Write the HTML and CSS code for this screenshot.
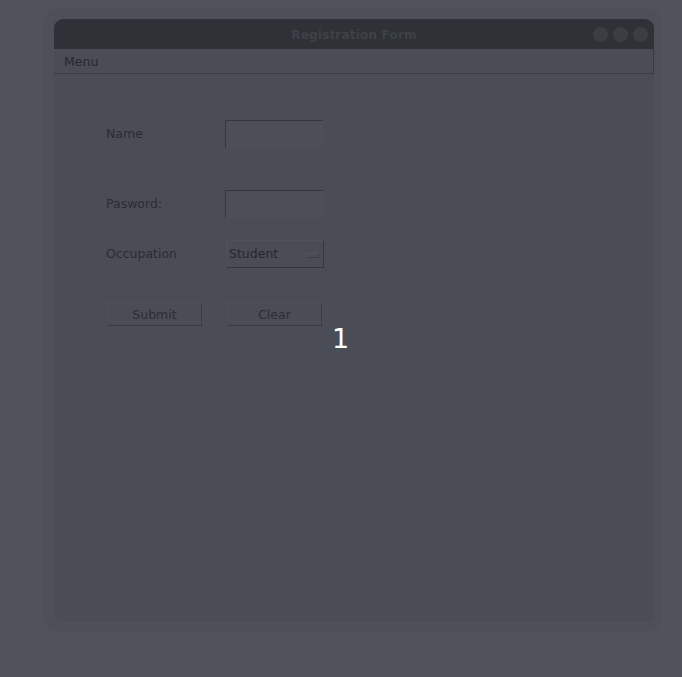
FILE: index.html
```html
<!DOCTYPE html>
<html>
<head>
<meta charset="utf-8">
<title>Registration Form</title>
<link rel="stylesheet" href="styles.css">
</head>
<body>
<div class="frame">
  <div class="window">
    <div class="titlebar">
      <span class="title">Registration Form</span>
      <div class="controls">
        <span class="ctl"></span><span class="ctl"></span><span class="ctl"></span>
      </div>
    </div>
    <div class="menubar"><span class="menu-item">Menu</span></div>
    <div class="content">
      <div class="form">
        <div class="row row-name">
          <span class="label">Name</span>
          <span class="input"></span>
        </div>
        <div class="row row-pass">
          <span class="label">Pasword:</span>
          <span class="input"></span>
        </div>
        <div class="row row-occ">
          <span class="label">Occupation</span>
          <span class="combo"><span class="combo-text">Student</span><span class="combo-btn"></span></span>
        </div>
        <div class="row row-btns">
          <span class="btn btn-submit">Submit</span>
          <span class="btn btn-clear">Clear</span>
        </div>
      </div>
    </div>
  </div>
</div>
<div class="marker">1</div>
</body>
</html>
```

FILE: styles.css
```css
html, body {
  margin: 0;
  padding: 0;
}
body {
  background: #50535c;
  width: 682px;
  height: 677px;
  overflow: hidden;
  font-family: "DejaVu Sans", "Liberation Sans", sans-serif;
  font-size: 12.5px;
  color: #2a2c31;
  position: relative;
}
.frame {
  margin: 8px 0 0 43px;
  width: 619px;
  height: 624px;
  box-sizing: border-box;
  padding: 11px 8px 10px 11px;
  border-radius: 16px;
  background: #4d5058;
}
.window {
  width: 600px;
  height: 603px;
  background: #4a4d55;
  border-radius: 9px 9px 10px 10px;
  display: flex;
  flex-direction: column;
  overflow: hidden;
}
.titlebar {
  height: 30px;
  flex: none;
  background: #2e3136;
  display: flex;
  align-items: center;
  justify-content: center;
  position: relative;
}
.title {
  font-weight: bold;
  font-size: 12px;
  color: #3e4147;
  letter-spacing: 0.2px;
  margin-top: 1px;
}
.controls {
  position: absolute;
  right: 6px;
  top: 8px;
  display: flex;
  gap: 5px;
}
.ctl {
  width: 15px;
  height: 15px;
  border-radius: 50%;
  background: #3a3d42;
}
.menubar {
  height: 24px;
  flex: none;
  border-bottom: 1px solid #393b41;
  border-right: 1px solid #393b41;
  display: flex;
  align-items: center;
  padding-left: 10px;
}
.menu-item {
  color: #26282c;
}
.content {
  flex: 1;
  padding: 46px 0 0 52px;
}
.form {
  display: flex;
  flex-direction: column;
}
.row {
  display: flex;
  align-items: center;
}
.label {
  width: 119px;
  flex: none;
  color: #2a2c31;
  margin-bottom: 2px;
}
.row-pass { margin-top: 42px; }
.row-occ { margin-top: 22px; }
.row-btns { margin-top: 34px; padding-left: 1px; gap: 25px; }
.input {
  width: 98px;
  height: 28px;
  box-sizing: border-box;
  border-top: 1px solid #35373d;
  border-left: 1px solid #35373d;
  background: #4c4f57;
}
.combo {
  margin-left: 1px;
  width: 98px;
  height: 28px;
  box-sizing: border-box;
  border-top: 1px solid #4f525a;
  border-left: 1px solid #4f525a;
  border-right: 1px solid #35373d;
  border-bottom: 1px solid #35373d;
  display: flex;
  align-items: center;
  justify-content: space-between;
  padding: 0 4px 2px 2px;
}
.combo-text {
  color: #26282c;
}
.combo-btn {
  width: 12px;
  height: 5px;
  margin-top: 4px;
  border-right: 1px solid #3a3c42;
  border-bottom: 1px solid #3a3c42;
  border-top: 1px solid #50535b;
  border-left: 1px solid #50535b;
  box-sizing: border-box;
}
.btn {
  width: 95px;
  height: 24px;
  box-sizing: border-box;
  border-top: 1px solid #4f525a;
  border-left: 1px solid #4f525a;
  border-right: 1px solid #393b41;
  border-bottom: 1px solid #393b41;
  display: flex;
  align-items: center;
  justify-content: center;
  color: #2c2e33;
}
.marker {
  position: absolute;
  left: 332px;
  top: 323px;
  font-family: "DejaVu Sans", sans-serif;
  font-size: 27px;
  color: #ffffff;
  line-height: 32px;
}
```
